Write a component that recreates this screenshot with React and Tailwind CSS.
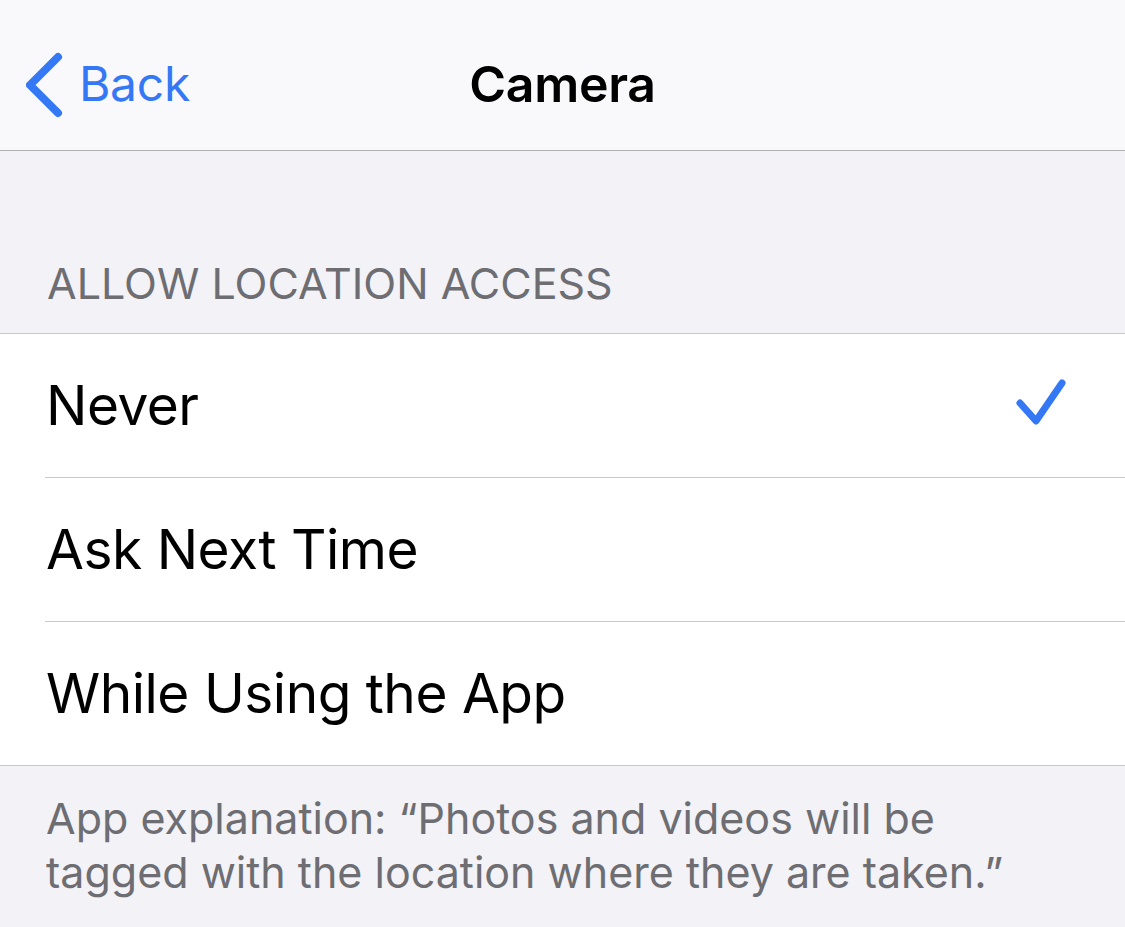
import React from "react";

const font = { fontFamily: "Inter, 'Noto Sans', sans-serif" };

function Row({ label, checked, last }) {
  return (
    <div>
      <div className="flex h-[143px] items-center justify-between pl-[46px] pr-[50px]">
        <span className="text-[55px] leading-[55px] text-black tracking-[-0.5px]">{label}</span>
        {checked && (
          <svg width="60" height="56" viewBox="0 0 60 56">
            <path d="M5 25 L21 43 L47 5" fill="none" stroke="#3478f6" strokeWidth="7" strokeLinecap="round" strokeLinejoin="round" />
          </svg>
        )}
      </div>
      {!last && <div className="ml-[45px] h-px bg-[#c8c7cc]" />}
    </div>
  );
}

export default function App() {
  return (
    <div className="w-[1125px] h-[927px] bg-[#f2f2f7] overflow-hidden" style={font}>
      <div className="grid h-[151px] grid-cols-[1fr_auto_1fr] border-b border-[#b1b1b3] bg-[#f9f9fb]">
        <div className="flex items-start pt-[52px] pl-[26px]">
          <svg width="42" height="66" viewBox="0 0 42 66" className="shrink-0">
            <path d="M32 5 L4 33 L32 61" fill="none" stroke="#3478f6" strokeWidth="8" strokeLinecap="round" strokeLinejoin="round" />
          </svg>
          <span className="ml-[11px] mt-[8px] text-[48px] leading-[48px] text-[#3478f6] tracking-[-0.3px]">Back</span>
        </div>
        <div className="pt-[59px] text-[50px] leading-[50px] font-semibold text-black tracking-[-0.3px]">Camera</div>
        <div />
      </div>
      <div className="pt-[111px] pb-[28px] pl-[47px] text-[43px] leading-[43px] text-[#6d6d72] tracking-[0px]">
        ALLOW LOCATION ACCESS
      </div>
      <div className="border-t border-b border-[#c8c7cc] bg-white">
        <Row label="Never" checked />
        <Row label="Ask Next Time" />
        <Row label="While Using the App" last />
      </div>
      <div className="pt-[25px] pl-[46px] pr-[20px] text-[43px] leading-[54px] text-[#6d6d72] whitespace-nowrap">
        App explanation: “Photos and videos will be
        <br />
        tagged with the location where they are taken.”
      </div>
    </div>
  );
}
